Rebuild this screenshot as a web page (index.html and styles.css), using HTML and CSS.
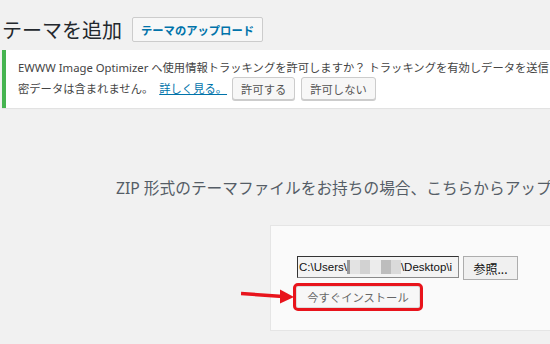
FILE: index.html
```html
<!DOCTYPE html>
<html lang="ja">
<head>
    <meta charset="UTF-8">
    <meta name="viewport" content="width=device-width, initial-scale=1.0">
    <title>テーマを追加</title>
    <link rel="stylesheet" href="styles.css">
</head>
<body>
    <div class="wrap">
        <!-- Page title -->
        <div class="title-row">
            <h1>テーマを追加</h1>
            <button class="page-title-action">テーマのアップロード</button>
        </div>

        <!-- Tracking notice -->
        <div class="notice">
            <p class="notice-line">EWWW Image Optimizer へ使用情報トラッキングを許可しますか？ トラッキングを有効しデータを送信します。個人情報や機</p>
            <p class="notice-line notice-actions">密データは含まれません。 <a href="#" class="notice-link">詳しく見る。</a><button class="btn">許可する</button><button class="btn">許可しない</button></p>
        </div>

        <!-- Upload -->
        <p class="install-help">ZIP 形式のテーマファイルをお持ちの場合、こちらからアップロードしてインストールできます。</p>

        <div class="upload-form">
            <div class="file-row">
                <div class="file-field">
                    <span>C:\Users\</span>
                    <span class="mosaic">
                        <span class="m1"></span><span class="m2"></span><span class="m3"></span><span class="m4"></span><span class="m5"></span><span class="m6"></span>
                    </span>
                    <span>\Desktop\i</span>
                </div>
                <button class="browse">参照...</button>
            </div>
            <div class="install-row">
                <svg class="arrow" width="54" height="16" viewBox="0 0 54 16">
                    <line x1="0" y1="5.5" x2="42" y2="8.5" stroke="#e8141c" stroke-width="3.5"/>
                    <polygon points="39,1.5 53,9 39,15.5" fill="#e8141c"/>
                </svg>
                <button class="install">今すぐインストール</button>
            </div>
        </div>
    </div>
</body>
</html>
```

FILE: styles.css
```css
/* General */
body { margin: 0; background-color: #f1f1f1; color: #444; font-family: "Noto Sans", "Noto Sans CJK JP", sans-serif; font-size: 11.3px; overflow: hidden; height: 344px; }
.wrap { padding-left: 2px; }
button { font-family: inherit; cursor: pointer; }

/* Title */
.title-row { display: flex; align-items: center; gap: 10px; padding-top: 17px; }
h1 { margin: 0; font-size: 20px; font-weight: 400; line-height: 25px; color: #23282d; font-family: "Noto Sans CJK JP", sans-serif; }
.page-title-action { height: 25px; padding: 0 8px; border: 1px solid #ccc; border-radius: 2px; background-color: #f7f7f7; color: #0073aa; font-size: 11.3px; font-weight: 700; font-family: "Noto Sans CJK JP", sans-serif; }

/* Notice */
.notice { margin-top: 8px; background-color: #fff; border-left: 4px solid #46b450; box-shadow: 0 1px 1px rgba(0, 0, 0, 0.06); padding: 8px 0 8px 12px; white-space: nowrap; overflow: hidden; }
.notice-line { margin: 0; line-height: 19px; }
.notice-actions { display: flex; align-items: center; height: 23px; margin-top: 0; }
.notice-link { color: #0073aa; text-decoration: underline; margin-right: 5px; margin-left: 6px; }
.btn { height: 23px; padding: 0 8px; margin-right: 6px; border: 1px solid #ccc; border-radius: 3px; background-color: #f7f7f7; box-shadow: 0 1px 0 #ccc; color: #555; font-size: 11.3px; font-family: "Noto Sans CJK JP", sans-serif; }

/* Upload help */
.install-help { margin: 70px 0 0; padding-left: 114px; line-height: 20px; font-size: 15.7px; color: #555d66; white-space: nowrap; overflow: hidden; font-family: "Noto Sans", "Noto Sans CJK JP", sans-serif; }

/* Upload form */
.upload-form { margin: 27px 0 0 268px; width: 290px; height: 106px; box-sizing: border-box; padding: 30px 0 0 26px; background-color: #fafafa; border: 1px solid #e5e5e5; }
.file-row { display: flex; align-items: flex-start; gap: 4px; }
.file-field { width: 162px; height: 22px; box-sizing: border-box; display: flex; align-items: center; overflow: hidden; white-space: nowrap; border: 1px solid #8a8a8a; border-top-color: #333; border-left-color: #333; background-color: #f3f3f3; color: #111; font-size: 11.5px; font-family: "Liberation Sans", sans-serif; padding-left: 1px; }
.mosaic { display: flex; flex: none; width: 54px; height: 14px; }
.mosaic span { flex: 1; }
.mosaic .m1 { flex: 0.3; background-color: #9a9a9a; }
.mosaic .m2 { background-color: #e3e3e3; }
.mosaic .m3 { background-color: #d2d2d2; }
.mosaic .m4 { background-color: #ececec; }
.mosaic .m5 { background-color: #bdbdbd; }
.mosaic .m6 { background-color: #dadada; }
.browse { width: 55px; height: 24px; padding: 0; border: 1px solid #adadad; background-color: #f0f0f0; color: #111; font-size: 12px; font-family: "Noto Sans CJK JP", sans-serif; }

.install-row { position: relative; margin-top: 6px; }
.install { width: 124px; height: 22px; margin-left: -1px; padding: 0; border: 1px solid #ddd; border-radius: 2px; background-color: #f7f7f7; color: #666; font-size: 11.3px; font-family: "Noto Sans CJK JP", sans-serif; outline: 3px solid #e8141c; outline-offset: 0; }
.arrow { position: absolute; left: -56px; top: 2px; }
```
